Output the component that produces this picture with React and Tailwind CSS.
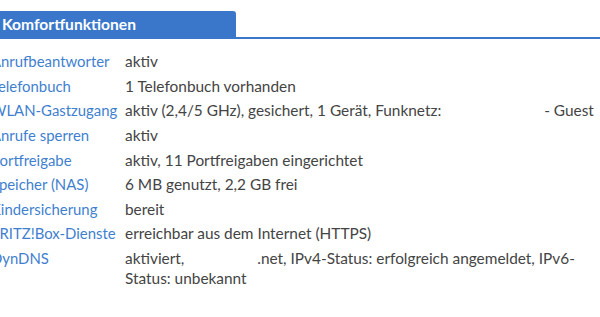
import React from "react";

const rows = [
  ["Anrufbeantworter", "aktiv"],
  ["Telefonbuch", "1 Telefonbuch vorhanden"],
  [
    "WLAN-Gastzugang",
    <>
      aktiv (2,4/5 GHz), gesichert, 1 Gerät, Funknetz:{" "}
      <span className="inline-block w-[95px]"></span> <span className="whitespace-nowrap">- Guest</span>
    </>,
  ],
  ["Anrufe sperren", "aktiv"],
  ["Portfreigabe", "aktiv, 11 Portfreigaben eingerichtet"],
  ["Speicher (NAS)", "6 MB genutzt, 2,2 GB frei"],
  ["Kindersicherung", "bereit"],
  ["FRITZ!Box-Dienste", "erreichbar aus dem Internet (HTTPS)"],
  [
    "DynDNS",
    <>
      aktiviert, <span className="inline-block w-[69px]"></span>.net, IPv4-Status: erfolgreich angemeldet,
      IPv6-Status: unbekannt
    </>,
  ],
];

export default function App() {
  return (
    <div className="w-[600px] h-[317px] overflow-hidden bg-white font-['Lato',sans-serif]">
      <div className="pt-[11px] flex border-b-2 border-[#3a77cb]">
        <div className="-ml-[10px] w-[246px] h-[26px] bg-[#3a77cb] rounded-tr-[3px] pl-[12px] text-white font-bold text-[15.6px] leading-[26px]">
          Komfortfunktionen
        </div>
      </div>
      <div className="-ml-[9px] mt-[10.7px] grid grid-cols-[134px_474px]">
        {rows.map(([label, value], i) => (
          <React.Fragment key={i}>
            <div className="py-[2.5px] text-[14.9px] leading-[19.6px] text-[#3f7fd0] whitespace-nowrap">{label}</div>
            <div className="py-[2.5px] text-[15.4px] leading-[19.6px] text-[#444444]">{value}</div>
          </React.Fragment>
        ))}
      </div>
    </div>
  );
}
